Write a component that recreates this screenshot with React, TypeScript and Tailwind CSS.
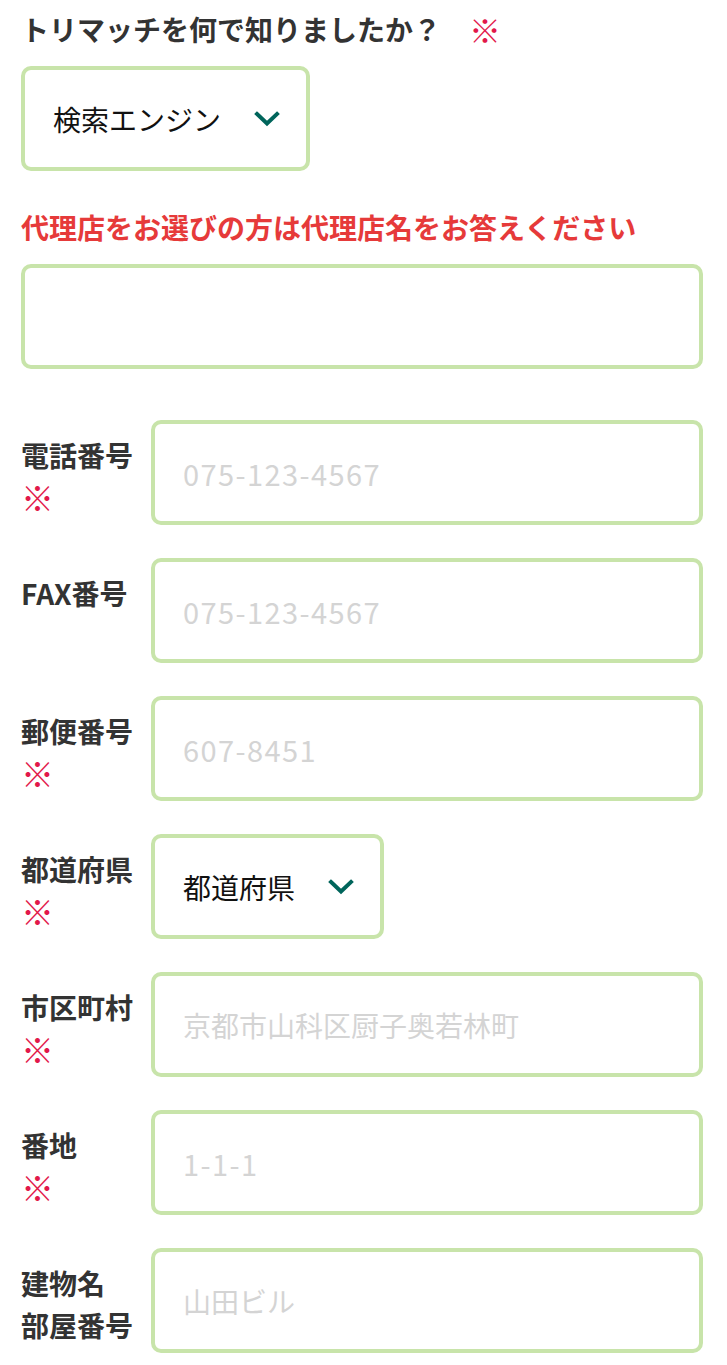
import { ReactNode } from "react";

const font = { fontFamily: '"Noto Sans CJK JP", "Noto Sans", sans-serif' };

type RowProps = {
  label: ReactNode;
  required?: boolean;
  children: ReactNode;
};

function Chevron() {
  return (
    <svg width="26" height="16" viewBox="0 0 26 16" className="shrink-0">
      <path
        d="M3 3 L13 12.5 L23 3"
        fill="none"
        stroke="#00655b"
        strokeWidth="4"
        strokeLinecap="square"
      />
    </svg>
  );
}

function SelectBox({ value }: { value: string }) {
  return (
    <div className="inline-flex h-[105px] items-center gap-[33px] rounded-[10px] border-4 border-[#c8e4aa] bg-white pl-[28px] pr-[26px]">
      <span className="text-[28px] leading-none text-[#111]">{value}</span>
      <Chevron />
    </div>
  );
}

function TextInput({
  placeholder,
  numeric,
}: {
  placeholder?: string;
  numeric?: boolean;
}) {
  return (
    <input
      type="text"
      placeholder={placeholder}
      className={
        "block h-[105px] w-full rounded-[10px] border-4 border-[#c8e4aa] bg-white pl-[28px] text-[#111] outline-none placeholder:text-[#d4d4d4] " +
        (numeric ? "text-[29px] tracking-[1.4px]" : "text-[28px] tracking-normal")
      }
      style={font}
    />
  );
}

// red required mark
function Mark() {
  return <div className="text-[33px] font-bold leading-[42px] text-[#e2184a]">※</div>;
}

function Row({ label, required, children }: RowProps) {
  return (
    <div className="grid grid-cols-[130px_1fr]">
      <div className="pt-[14px] text-[28px] font-bold leading-[42px] text-[#333]">
        <div>{label}</div>
        {required && <Mark />}
      </div>
      <div>{children}</div>
    </div>
  );
}

export default function App() {
  return (
    <div className="min-h-[1365px] bg-white pl-[21px] pr-[24px] pt-2" style={font}>
      <div className="flex items-center text-[28px] font-bold leading-[42px] text-[#333]">
        <span>トリマッチを何で知りましたか？</span>
        <span className="ml-[28px] text-[32px] font-bold text-[#e2184a]">※</span>
      </div>
      <div className="mt-4">
        <SelectBox value="検索エンジン" />
      </div>

      <div className="mt-[35px] text-[28px] font-bold leading-[42px] text-[#e63a3a]">
        代理店をお選びの方は代理店名をお答えください
      </div>
      <div className="mt-4">
        <TextInput />
      </div>

      <div className="mt-[51px] flex flex-col gap-[33px]">
        <Row label="電話番号" required>
          <TextInput placeholder="075-123-4567" numeric />
        </Row>
        <Row label="FAX番号">
          <TextInput placeholder="075-123-4567" numeric />
        </Row>
        <Row label="郵便番号" required>
          <TextInput placeholder="607-8451" numeric />
        </Row>
        <Row label="都道府県" required>
          <SelectBox value="都道府県" />
        </Row>
        <Row label="市区町村" required>
          <TextInput placeholder="京都市山科区厨子奥若林町" />
        </Row>
        <Row label="番地" required>
          <TextInput placeholder="1-1-1" numeric />
        </Row>
        <Row
          label={
            <>
              建物名
              <br />
              部屋番号
            </>
          }
        >
          <TextInput placeholder="山田ビル" />
        </Row>
      </div>
    </div>
  );
}
